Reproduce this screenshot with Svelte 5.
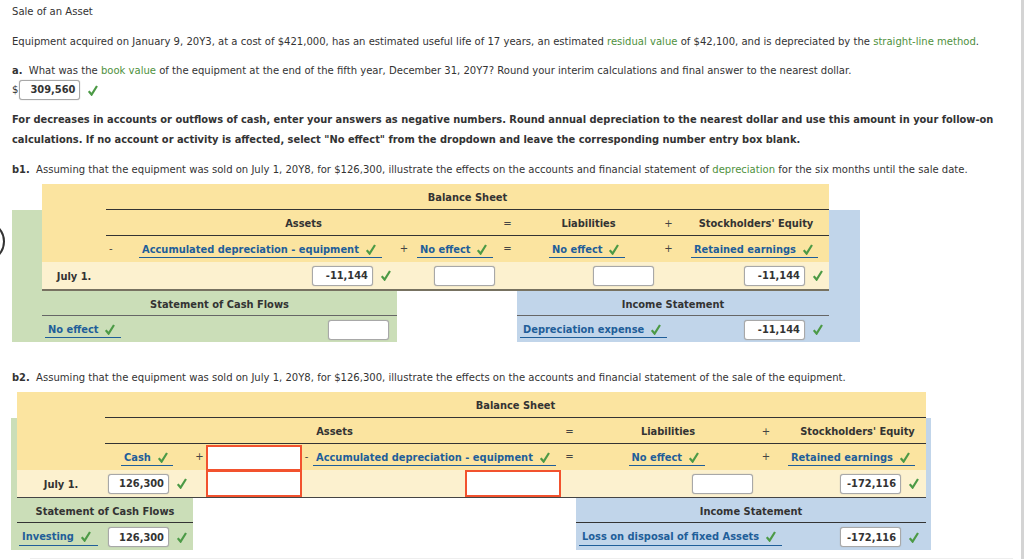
<script>
  const sheets = [
    { id: 'one', date: 'July 1.' },
    { id: 'two', date: 'July 1.' }
  ];
</script>

{#snippet tick()}
  <svg class="tick" viewBox="0 0 10 11" width="10" height="11" aria-hidden="true">
    <path d="M0.8 6.2 L3.6 9.6 L9 1" fill="none" stroke="#4c9a46" stroke-width="2.2" />
  </svg>
{/snippet}

{#snippet pick(label, width)}
  <span class="pick" style="width: {width}px"><span class="pick-label">{label}</span>{@render tick()}</span>
{/snippet}

{#snippet box(value, checked = true)}
  <span class="box">{value}</span>
  {#if checked}{@render tick()}{/if}
{/snippet}

<main class="page">
  <span class="cut-circle"></span>

  <p class="title">Sale of an Asset</p>
  <p class="intro">
    Equipment acquired on January 9, 20Y3, at a cost of $421,000, has an estimated useful life of 17 years, an estimated
    <span class="term">residual value</span> of $42,100, and is depreciated by the <span class="term">straight-line method</span>.
  </p>
  <p class="q-a">
    <b>a.</b>&nbsp; What was the <span class="term">book value</span> of the equipment at the end of the fifth year, December 31, 20Y7? Round your interim calculations and final answer to the nearest dollar.
  </p>
  <div class="answer">
    <span>$</span>
    <span class="box">309,560</span>
    {@render tick()}
  </div>
  <p class="notice">
    For decreases in accounts or outflows of cash, enter your answers as negative numbers. Round annual depreciation to the nearest dollar and use this amount in your follow-on calculations. If no account or activity is affected, select "No effect" from the dropdown and leave the corresponding number entry box blank.
  </p>
  <p class="q-b1">
    <b>b1.</b>&nbsp; Assuming that the equipment was sold on July 1, 20Y8, for $126,300, illustrate the effects on the accounts and financial statement of <span class="term">depreciation</span> for the six months until the sale date.
  </p>

  <section class="sheet sheet-one">
    <div class="backing">
      <div class="back-green"></div>
      <div class="back-blue"></div>
    </div>
    <div class="front">
      <div class="balance">
        <div class="bs-title">Balance Sheet</div>

        <div class="head assets">Assets</div>
        <div class="head op">=</div>
        <div class="head">Liabilities</div>
        <div class="head op">+</div>
        <div class="head">Stockholders' Equity</div>

        <div class="acct op minus">-</div>
        <div class="acct left-3">{@render pick('Accumulated depreciation - equipment', 243)}</div>
        <div class="acct op">+</div>
        <div class="acct left-0">{@render pick('No effect', 76)}</div>
        <div class="acct op">=</div>
        <div class="acct">{@render pick('No effect', 76)}</div>
        <div class="acct op">+</div>
        <div class="acct">{@render pick('Retained earnings', 127)}</div>

        <div class="val date">{sheets[0].date}</div>
        <div class="val"></div>
        <div class="val amt">{@render box('-11,144')}</div>
        <div class="val"></div>
        <div class="val amt pad-3">{@render box('', false)}</div>
        <div class="val"></div>
        <div class="val amt pad-3">{@render box('', false)}</div>
        <div class="val"></div>
        <div class="val amt pad-6">{@render box('-11,144')}</div>
      </div>

      <div class="statements">
        <div class="stmt cash">
          <div class="stmt-title">Statement of Cash Flows</div>
          <div class="stmt-row">
            {@render pick('No effect', 76)}
            <span class="amt pad-2">{@render box('', false)}</span>
          </div>
        </div>
        <div class="stmt income">
          <div class="stmt-title">Income Statement</div>
          <div class="stmt-row">
            {@render pick('Depreciation expense', 147)}
            <span class="amt">{@render box('-11,144')}</span>
          </div>
        </div>
      </div>
    </div>
  </section>

  <p class="q-b2">
    <b>b2.</b>&nbsp; Assuming that the equipment was sold on July 1, 20Y8, for $126,300, illustrate the effects on the accounts and financial statement of the sale of the equipment.
  </p>

  <section class="sheet sheet-two">
    <div class="backing">
      <div class="back-green"></div>
      <div class="back-blue"></div>
    </div>
    <div class="front">
      <div class="balance">
        <div class="bs-title">Balance Sheet</div>

        <div class="head assets">Assets</div>
        <div class="head op">=</div>
        <div class="head">Liabilities</div>
        <div class="head op">+</div>
        <div class="head equity">Stockholders' Equity</div>

        <div class="acct cash-cell">{@render pick('Cash', 52)}</div>
        <div class="acct op">+</div>
        <div class="acct red-cell"><span class="red"></span></div>
        <div class="acct op">-</div>
        <div class="acct left-2">{@render pick('Accumulated depreciation - equipment', 243)}</div>
        <div class="acct op">=</div>
        <div class="acct">{@render pick('No effect', 76)}</div>
        <div class="acct op">+</div>
        <div class="acct">{@render pick('Retained earnings', 127)}</div>

        <div class="val date">{sheets[1].date}</div>
        <div class="val amt pad-6">{@render box('126,300')}</div>
        <div class="val"></div>
        <div class="val red-cell"><span class="red"></span></div>
        <div class="val"></div>
        <div class="val red-cell end"><span class="red"></span></div>
        <div class="val"></div>
        <div class="val amt pad-2">{@render box('', false)}</div>
        <div class="val"></div>
        <div class="val amt pad-7">{@render box('-172,116')}</div>
      </div>

      <div class="statements">
        <div class="stmt cash">
          <div class="stmt-title">Statement of Cash Flows</div>
          <div class="stmt-row">
            {@render pick('Investing', 79)}
            <span class="amt">{@render box('126,300')}</span>
          </div>
        </div>
        <div class="stmt income">
          <div class="stmt-title">Income Statement</div>
          <div class="stmt-row">
            {@render pick('Loss on disposal of fixed Assets', 203)}
            <span class="amt">{@render box('-172,116')}</span>
          </div>
        </div>
      </div>
    </div>
  </section>

  <div class="foot-rule"></div>
</main>

<style>
  :global(body) {
    background: #fff;
    overflow: hidden;
  }

  .page {
    position: relative;
    height: 559px;
    box-sizing: border-box;
    padding-top: 6px;
    overflow: hidden;
    font-family: "DejaVu Sans", Verdana, sans-serif;
    font-size: 10.05px;
    color: #333;
    border-right: 3px solid #d4d4d4;
  }

  /* clipped circular button peeking in from the left edge */
  .cut-circle {
    position: absolute;
    left: -36px;
    top: 221px;
    box-sizing: border-box;
    width: 41px;
    height: 41px;
    border: 2px solid #333;
    border-radius: 50%;
  }

  p {
    margin: 0;
  }

  .title,
  .intro,
  .q-a,
  .answer,
  .notice,
  .q-b1,
  .q-b2 {
    margin-left: 12px;
    margin-right: 20px;
    line-height: 12px;
  }

  .intro {
    margin-top: 18px;
  }

  .q-a {
    margin-top: 17px;
  }

  .answer {
    display: flex;
    align-items: center;
    margin-top: 3px;
    height: 20px;
  }

  .answer .box {
    margin-left: 1px;
  }

  .answer .tick {
    margin-left: 8px;
  }

  .notice {
    margin-top: 10px;
    font-size: 9.9px;
    font-weight: 700;
    line-height: 20px;
  }

  .q-b1 {
    margin-top: 14px;
  }

  .q-b2 {
    margin-top: 30px;
  }

  .term {
    color: #4f9140;
  }

  b {
    font-size: 9.9px;
    font-weight: 700;
  }

  .box {
    display: inline-flex;
    align-items: center;
    justify-content: flex-end;
    box-sizing: border-box;
    width: 61px;
    height: 20px;
    padding: 0 4px;
    background: #fff;
    border: 1px solid #a8a8a8;
    border-radius: 3px;
    box-shadow: 0 0 1px #999;
    font-size: 9.9px;
    font-weight: 700;
    color: #333;
  }

  .tick {
    flex: none;
  }

  /* sheets: coloured backing panels share a grid cell with the table on top */
  .sheet {
    display: grid;
  }

  .backing,
  .front {
    grid-area: 1 / 1;
  }

  .backing {
    display: flex;
    justify-content: space-between;
    margin-top: 26px;
  }

  .back-green {
    background: #cbdeb8;
  }

  .back-blue {
    background: #c1d5ea;
  }

  .sheet-one {
    width: 848px;
    margin: 8px 0 0 12px;
  }

  .sheet-one .back-green {
    width: 385px;
  }

  .sheet-one .back-blue {
    width: 343px;
  }

  .sheet-one .front {
    margin-left: 30px;
    width: 787px;
  }

  .sheet-two {
    width: 920px;
    margin: 8px 0 0 11px;
  }

  .sheet-two .back-green {
    width: 182px;
  }

  .sheet-two .back-blue {
    width: 355px;
  }

  .sheet-two .front {
    margin-left: 6px;
    width: 909px;
  }

  .balance {
    display: grid;
    grid-template-rows: 25px 26px 27px 27px;
    background: #fbe4a0;
    font-size: 9.9px;
    font-weight: 700;
  }

  .sheet-one .balance {
    grid-template-columns: 64px 30px 255px 26px 81px 19px 140px 23px 149px;
    border-bottom: 2px solid #777261;
  }

  .sheet-two .balance {
    grid-template-columns: 88px 88px 13px 96px 9px 250px 17px 177px 22px 149px;
    border-bottom: 1px solid #444;
  }

  .bs-title {
    grid-column: 2 / -1;
    display: flex;
    align-items: center;
    justify-content: center;
    padding-top: 1px;
  }

  .head {
    display: flex;
    align-items: center;
    justify-content: center;
    padding: 1px 0 0 3px;
    border-top: 1px solid #333;
    border-bottom: 1px solid #333;
    margin-bottom: -1px;
  }

  .head.op {
    padding-left: 0;
  }

  .sheet-one .assets {
    grid-column: 2 / span 4;
  }

  .sheet-two .assets {
    grid-column: 2 / span 5;
  }

  .sheet-two .equity {
    padding-left: 12px;
  }

  .op {
    font-weight: 400;
    font-size: 10.05px;
    color: #444;
  }

  .acct {
    display: flex;
    align-items: center;
    justify-content: center;
    border-bottom: 1px solid #333;
    margin-bottom: -1px;
  }

  /* first account row starts after the date column */
  .acct:nth-child(7) {
    grid-column: 2;
  }

  .minus {
    justify-content: flex-start;
    padding-left: 3px;
  }

  .left-0,
  .left-2,
  .left-3 {
    justify-content: flex-start;
  }

  .left-2 {
    padding-left: 2px;
  }

  .left-3 {
    padding-left: 3px;
  }

  .cash-cell {
    padding-right: 4px;
  }

  .pick {
    display: flex;
    align-items: center;
    gap: 7px;
    box-sizing: border-box;
    height: 17px;
    padding: 0 0 0 3px;
    margin-top: 2px;
    border-bottom: 1.5px solid #1f5e99;
    color: #1f5e99;
    white-space: nowrap;
    flex: none;
  }

  .val {
    background: #fcf1cf;
  }

  .date {
    display: flex;
    align-items: center;
    justify-content: center;
    padding-top: 1px;
  }

  .amt {
    display: flex;
    align-items: center;
    justify-content: flex-end;
    gap: 8px;
  }

  .pad-2 { padding-right: 2px; }
  .pad-3 { padding-right: 3px; }
  .pad-6 { padding-right: 6px; }
  .pad-7 { padding-right: 7px; }

  .red-cell {
    display: flex;
    align-items: stretch;
    border-bottom: 0;
  }

  .acct.red-cell {
    padding-top: 2px;
    position: relative;
    z-index: 1;
  }

  .red {
    flex: 1;
    box-sizing: border-box;
    background: #fff;
    border: 2px solid #f2522e;
  }

  .end {
    justify-content: flex-end;
  }

  .end .red {
    flex: none;
    width: 96px;
  }

  .statements {
    display: flex;
    justify-content: space-between;
    font-size: 9.9px;
    font-weight: 700;
  }

  .stmt-title {
    display: flex;
    align-items: center;
    justify-content: center;
    height: 25px;
    padding-top: 2px;
    box-sizing: border-box;
    border-bottom: 1.5px solid #666;
  }

  .sheet-two .stmt-title {
    border-bottom: 1px solid #333;
  }

  .stmt-row {
    display: flex;
    align-items: center;
    justify-content: space-between;
    box-sizing: border-box;
    height: 26px;
    padding: 1px 6px 0 3px;
  }

  .sheet-two .stmt-row {
    height: 27px;
    padding: 1px 6px 0 2px;
  }

  .sheet-two .income .stmt-row {
    padding: 1px 7px 0 3px;
  }

  .stmt-row .pick {
    margin-top: 0;
  }

  .sheet-one .cash {
    width: 355px;
  }

  .sheet-one .income {
    width: 312px;
  }

  .sheet-two .cash {
    width: 176px;
  }

  .sheet-two .income {
    width: 350px;
  }

  .foot-rule {
    height: 1px;
    margin: 8px 8px 0 30px;
    background: #eee;
  }
</style>
